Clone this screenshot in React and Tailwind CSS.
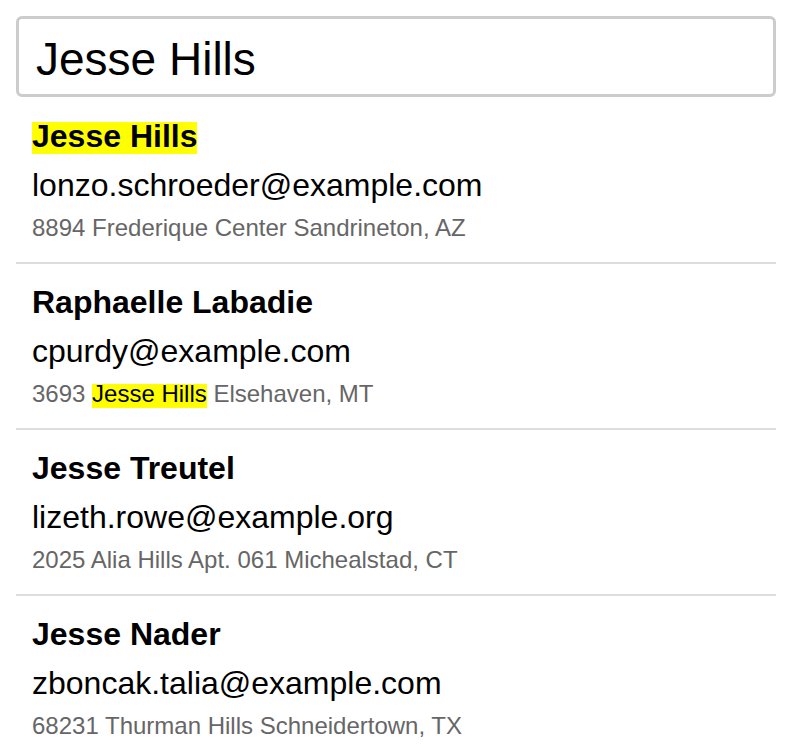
import React from "react";

const people = [
  {
    name: [{ t: "Jesse Hills", h: true }],
    email: "lonzo.schroeder@example.com",
    addr: [{ t: "8894 Frederique Center Sandrineton, AZ" }],
  },
  {
    name: [{ t: "Raphaelle Labadie" }],
    email: "cpurdy@example.com",
    addr: [{ t: "3693 " }, { t: "Jesse Hills", h: true }, { t: " Elsehaven, MT" }],
  },
  {
    name: [{ t: "Jesse Treutel" }],
    email: "lizeth.rowe@example.org",
    addr: [{ t: "2025 Alia Hills Apt. 061 Michealstad, CT" }],
  },
  {
    name: [{ t: "Jesse Nader" }],
    email: "zboncak.talia@example.com",
    addr: [{ t: "68231 Thurman Hills Schneidertown, TX" }],
  },
];

export default function App() {
  return (
    <div className="pt-4 pl-4 pr-[14px] bg-white min-h-screen font-['Liberation_Sans',Arial,sans-serif] text-black">
      <div className="flex items-center h-[81px] mb-px pt-[5px] pl-[17px] border-[3px] border-[#cccccc] rounded-[6px] text-[46px]">
        Jesse Hills
      </div>
      <ul>
        {people.map((p, i) => (
          <li
            key={i}
            className={
              "px-4 pt-5 pb-5 " +
              (i < people.length - 1 ? "border-b-2 border-[#dddddd]" : "")
            }
          >
            <div className="text-[32px] font-bold leading-[37px]">
              {p.name.map((s, j) =>
                s.h ? (
                  <span key={j} className="inline-block bg-[#ffff00] leading-[28px] pb-[4px]">
                    {s.t}
                  </span>
                ) : (
                  <span key={j}>{s.t}</span>
                )
              )}
            </div>
            <div className="text-[32px] leading-[37px] mt-3">{p.email}</div>
            <div className="text-[24px] leading-[28px] mt-[10px] text-[#666666] whitespace-pre">
              {p.addr.map((s, j) =>
                s.h ? (
                  <span key={j} className="inline-block bg-[#ffff00] text-black leading-[20px] pb-[4px]">
                    {s.t}
                  </span>
                ) : (
                  <span key={j}>{s.t}</span>
                )
              )}
            </div>
          </li>
        ))}
      </ul>
    </div>
  );
}
